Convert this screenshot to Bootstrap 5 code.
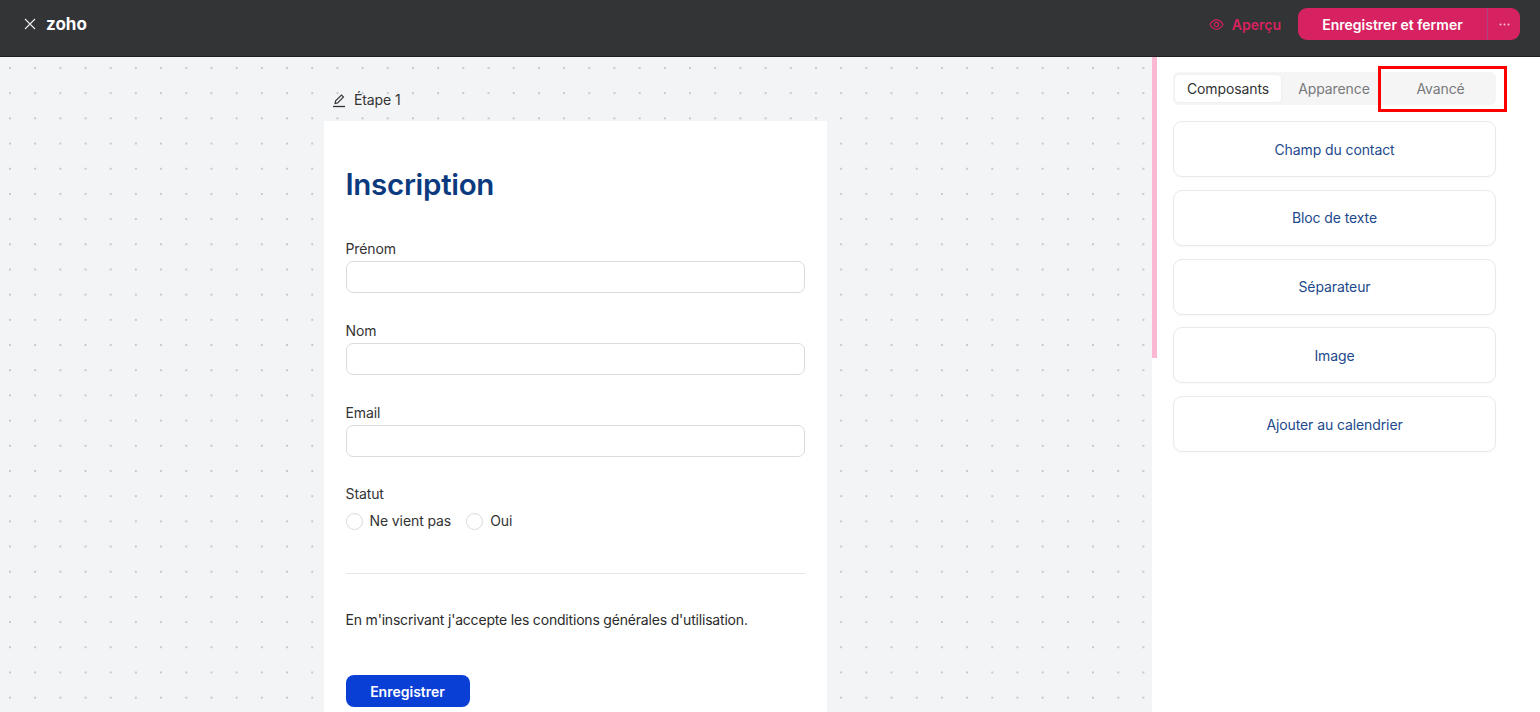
<!DOCTYPE html>
<html lang="fr">
<head>
<meta charset="utf-8">
<title>Inscription</title>
<link href="https://cdn.jsdelivr.net/npm/bootstrap@5.3.0/dist/css/bootstrap.min.css" rel="stylesheet">
<style>
html,body{height:100%;overflow:hidden;}
body{font-family:"Inter","Noto Sans",sans-serif;font-size:14px;color:#2b2b2b;display:flex;flex-direction:column;letter-spacing:-.1px;}
.topbar{height:57px;background:#333436;border-bottom:1px solid #1f2021;padding:0 20px 8px 24px;flex:none;}
.brand{color:#fff;font-weight:700;font-size:17px;letter-spacing:0;}
.brand span{margin-left:10px;padding-top:2px;}
.preview{color:#d9215f;font-weight:600;font-size:14px;letter-spacing:0;margin-right:17px;}
.savegroup{height:32px;background:#d72261;border-radius:9px;color:#fff;font-weight:600;font-size:14px;overflow:hidden;}
.savegroup .btn{color:#fff;font-weight:600;font-size:14px;border:0;padding:0;border-radius:0;height:32px;}
.save-main{width:190px;border-right:1px solid #a8477e !important;}
.save-more{width:32px;}
.workarea{min-height:0;}
.canvas{width:1152px;flex:none;background-color:#f3f4f6;background-image:radial-gradient(circle at 1px 1px,#c6c8cc 1px,transparent 1.2px);background-size:25.2px 25.2px;background-position:9px 10px;padding:0 0 0 324px;overflow:hidden;}
.steplabel{height:64px;padding:32px 0 0 8px;font-size:14px;color:#333;}
.formsheet{width:503px;background:#fff;padding:43px 22px 0 21.500px;height:700px;}
.formsheet h1{font-size:29.500px;font-weight:600;color:#0b3a7e;margin:0 0 35px;line-height:40px;letter-spacing:-.3px;}
.fieldblock{height:81.800px;}
.fieldblock label{display:block;margin:0 0 2px;line-height:20px;font-size:14px;color:#333;}
.fieldblock .form-control{height:32px;width:459.500px;border-radius:7px;border-color:#d9dbdf;}
.radiorow{height:25px;gap:5px;margin-top:4.500px;}
.radiorow .form-check-input{width:17px;height:17px;margin:0;border-color:#d8dadd;flex:none;}
.radiorow label{margin-right:10px;margin-left:2px;font-size:14px;color:#333;}
.sheetrule{margin:39.500px 0 0;width:459.500px;border-color:#e4e6e9;opacity:1;}
.legal{margin:36px 0 0;line-height:20px;font-size:14px;color:#2b2b2b;letter-spacing:-.19px;}
.submit{margin-top:45px;width:124px;height:32px;background:#0a3fd6;color:#fff;font-weight:600;font-size:14px;border:0;border-radius:8px;padding:0;}
.sidepanel{flex:1;background:#fff;padding:15px 44px 0 21px;}
.pinkbar{left:0;top:0;width:5px;height:301px;background:#fcb8d2;}
.tabbar{height:33px;background:#f5f5f5;border-radius:6px;padding:3px 2px;}
.tabbar .nav-link{height:27px;padding:0;border-radius:4px;color:#77797d;font-size:14px;line-height:27px;text-align:center;}
.tabbar .nav-link.active{background:#fff;color:#333;box-shadow:0 0 2px rgba(0,0,0,.08);}
.tab-a{width:106px;}.tab-b{width:106px;}.tab-c{flex:1;}
.compo{height:56px;border:1px solid #e8e9eb;border-radius:9px;color:#1d4a8c;font-size:14px;box-shadow:0 1px 2px rgba(0,0,0,.03);margin-top:12.750px;}
.compo:first-of-type{margin-top:16px;}
.redbox{left:226px;top:9px;width:129px;height:46px;border:3px solid #f00;pointer-events:none;}
</style>
</head>
<body>
<header class="topbar d-flex align-items-center justify-content-between">
  <div class="d-flex align-items-center brand">
    <svg width="12" height="12" viewBox="0 0 12 12" fill="none" stroke="#e8e8e8" stroke-width="1.200"><path d="M1 1l10 10M11 1L1 11"/></svg>
    <span>zoho</span>
  </div>
  <div class="d-flex align-items-center">
    <span class="preview d-flex align-items-center">
      <svg width="15" height="15" viewBox="0 0 16 16" fill="none" stroke="#d9215f" stroke-width="1.200" class="me-2"><path d="M1 8c2-3.400 4.300-5 7-5s5 1.600 7 5c-2 3.400-4.300 5-7 5s-5-1.600-7-5z"/><circle cx="8" cy="8" r="2.300"/></svg>
      Aperçu
    </span>
    <div class="savegroup d-flex">
      <button type="button" class="btn save-main">Enregistrer et fermer</button>
      <button type="button" class="btn save-more d-flex align-items-center justify-content-center" aria-label="Plus">
        <svg width="11" height="3" viewBox="0 0 11 3" fill="#f3c6d6"><circle cx="1.500" cy="1.500" r="1"/><circle cx="5.500" cy="1.500" r="1"/><circle cx="9.500" cy="1.500" r="1"/></svg>
      </button>
    </div>
  </div>
</header>
<div class="workarea d-flex flex-grow-1">
  <main class="canvas">
    <div class="steplabel d-flex align-items-start">
      <svg width="14" height="15" viewBox="0 0 14 15" fill="none" stroke="#333" stroke-width="1.100" class="me-2 mt-1"><path d="M3 10.500l.6-2.600L9.500 2l2 2-5.900 5.900z"/><path d="M1 13.500h12" stroke-width="1.300"/></svg>
      <span>Étape 1</span>
    </div>
    <form class="formsheet">
      <h1>Inscription</h1>
      <div class="fieldblock"><label for="f1">Prénom</label><input id="f1" class="form-control" type="text"></div>
      <div class="fieldblock"><label for="f2">Nom</label><input id="f2" class="form-control" type="text"></div>
      <div class="fieldblock"><label for="f3">Email</label><input id="f3" class="form-control" type="text"></div>
      <div class="fieldblock m-0 h-auto">
        <label>Statut</label>
        <div class="radiorow d-flex align-items-center">
          <input class="form-check-input" type="radio" name="st" id="r1"><label for="r1" class="mb-0">Ne vient pas</label>
          <input class="form-check-input" type="radio" name="st" id="r2"><label for="r2" class="mb-0">Oui</label>
        </div>
      </div>
      <hr class="sheetrule">
      <p class="legal">En m'inscrivant j'accepte les conditions générales d'utilisation.</p>
      <button type="button" class="btn submit">Enregistrer</button>
    </form>
  </main>
  <aside class="sidepanel position-relative">
    <div class="pinkbar position-absolute"></div>
    <ul class="nav tabbar flex-nowrap">
      <li class="nav-item tab-a"><a class="nav-link active" href="#">Composants</a></li>
      <li class="nav-item tab-b"><a class="nav-link" href="#">Apparence</a></li>
      <li class="nav-item tab-c"><a class="nav-link" href="#">Avancé</a></li>
    </ul>
    <div class="d-flex flex-column">
      <div class="compo d-flex align-items-center justify-content-center">Champ du contact</div>
      <div class="compo d-flex align-items-center justify-content-center">Bloc de texte</div>
      <div class="compo d-flex align-items-center justify-content-center">Séparateur</div>
      <div class="compo d-flex align-items-center justify-content-center">Image</div>
      <div class="compo d-flex align-items-center justify-content-center">Ajouter au calendrier</div>
    </div>
    <div class="redbox position-absolute"></div>
  </aside>
</div>
<script src="https://cdn.jsdelivr.net/npm/bootstrap@5.3.0/dist/js/bootstrap.bundle.min.js"></script>
</body>
</html>
